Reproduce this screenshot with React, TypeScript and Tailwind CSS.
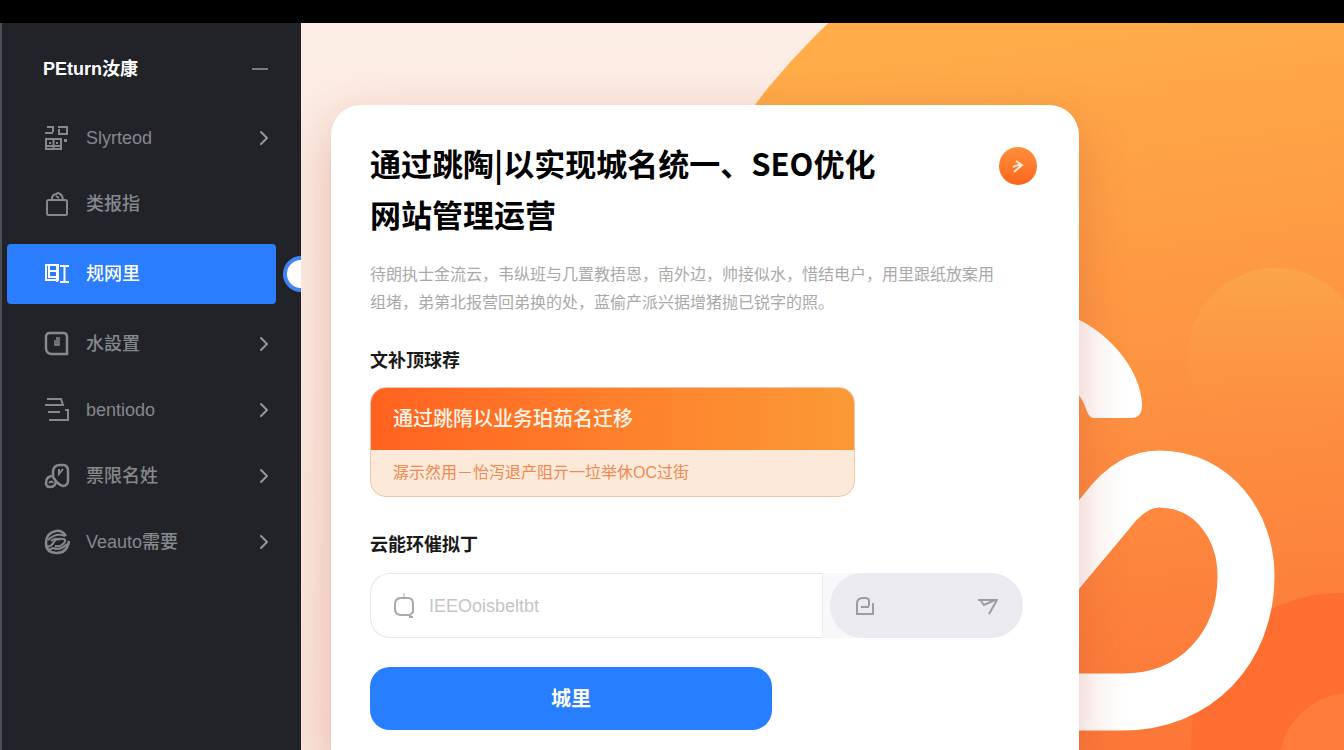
import React from 'react';
import { ChevronRight } from 'lucide-react';

interface NavItem {
  label: string;
  icon: React.ReactNode;
  active?: boolean;
  hasChildren?: boolean;
}

const Icon: React.FC<{ children: React.ReactNode }> = ({ children }) => (
  <svg viewBox="0 0 26 26" className="h-[26px] w-[26px] shrink-0" fill="none" stroke="currentColor" strokeWidth="2" aria-hidden="true">
    {children}
  </svg>
);

const navItems: NavItem[] = [
  {
    label: 'Slyrteod',
    hasChildren: true,
    icon: (
      <Icon>
        <path d="M3 2h6v5M1 8h8M14 2h9v7h-8V4M2 14h15v10H2zM9.500 14v10M5 18h2M12 18h2M3 21h13" />
        <path d="M20 14h3v3h-3z" fill="currentColor" stroke="none" />
      </Icon>
    ),
  },
  {
    label: '类报指',
    icon: (
      <Icon>
        <rect x="3" y="9" width="20" height="15" rx="1.5" />
        <path d="M8 9V7q0-3 4-4l2-1q5 2 5 7M12 5l3 2" />
      </Icon>
    ),
  },
  {
    label: '规网里',
    active: true,
    icon: (
      <Icon>
        <path d="M2 4h12v15H2zM5 4v12h8M5 10h8M13 4v17M16 5h9M20.500 5v16M16 21h9" />
      </Icon>
    ),
  },
  {
    label: '水設置',
    hasChildren: true,
    icon: (
      <Icon>
        <path d="M6 2h13q4 0 4 4v17H8q-6 0-6-6V6q0-4 4-4z" strokeWidth="2.500" />
        <path d="M13 6v8M11 9v5h4V6" strokeWidth="1.500" />
      </Icon>
    ),
  },
  {
    label: 'bentiodo',
    hasChildren: true,
    icon: (
      <Icon>
        <path d="M3 2h14l2 6H1M4 15h12M5 23h19V13h-3" />
      </Icon>
    ),
  },
  {
    label: '票限名姓',
    hasChildren: true,
    icon: (
      <Icon>
        <path d="M9 14V8q1-6 7-6h3q5 0 5 6v9q0 6-5 6-5-1-10-9" strokeWidth="2.500" />
        <path d="M9 13q-7 0-7 7 0 4 4 4 5 0 6-5" strokeWidth="2.500" />
        <path d="M5 20q3-3 4 0M15 6v5l4-5" />
      </Icon>
    ),
  },
  {
    label: 'Veauto需要',
    hasChildren: true,
    icon: (
      <Icon>
        <path d="M22 7Q18 1 12 2 2 4 2 14q0 10 11 10 10 0 12-12" strokeWidth="2.500" />
        <path d="M4 11q8-8 17-4M3 18q5-1 7-5t9-3q4 0 1 4t-9 3M7 12q4-4 9-1M9 19q7 3 14-4M5 21l4-2" />
      </Icon>
    ),
  },
];

const Sidebar: React.FC = () => (
  <aside className="relative w-[301px] shrink-0 border-l-2 border-[#4b4f55] bg-[#212328] pt-[23px] pr-[25px] pl-[5px]">
    <div className="flex h-[46px] items-center justify-between pr-1.5 pl-9">
      <span className="text-[18px] leading-6 font-bold text-white">PEturn汝康</span>
      <button type="button" aria-label="收起菜单" className="flex h-6 w-[18px] items-center">
        <span className="h-0.5 w-4 bg-[#777a80]" />
      </button>
    </div>
    <nav className="mt-[17px] flex flex-col gap-2">
      {navItems.map((item) => (
        <a
          key={item.label}
          href="#"
          aria-current={item.active ? 'page' : undefined}
          className={
            item.active
              ? 'my-[3px] flex h-[60px] items-center rounded-[4px] bg-[#2a7dff] pl-[37px] text-white'
              : 'flex h-[58px] items-center pl-[37px] text-[#85888c]'
          }
        >
          {item.icon}
          <span className="ml-4 flex-1 text-[18px] leading-6 font-medium">{item.label}</span>
          {item.hasChildren && <ChevronRight className="h-6 w-6 text-[#94979b]" />}
        </a>
      ))}
    </nav>
    <span className="absolute top-[233px] -right-[18px] h-9 w-9 rounded-full border-4 border-[#3f86f5] bg-white" />
  </aside>
);

const Backdrop: React.FC = () => (
  <svg
    viewBox="0 0 1043 727"
    preserveAspectRatio="xMaxYMin slice"
    className="absolute inset-0 h-full w-full"
    aria-hidden="true"
  >
    <defs>
      <linearGradient id="sun" gradientUnits="userSpaceOnUse" x1="800" y1="0" x2="900" y2="727">
        <stop offset="0" stopColor="#ffac49" />
        <stop offset="0.500" stopColor="#fd9241" />
        <stop offset="1" stopColor="#fc7638" />
      </linearGradient>
      <linearGradient id="bubble" x1="0" y1="0" x2="0" y2="1">
        <stop offset="0" stopColor="#fba54a" />
        <stop offset="1" stopColor="#fd9040" stopOpacity="0" />
      </linearGradient>
    </defs>
    <circle cx="1000" cy="500" r="688" fill="url(#sun)" />
    <circle cx="975" cy="333" r="88" fill="url(#bubble)" />
    <circle cx="1038" cy="718" r="148" fill="#ff6e31" />
    <circle cx="1050" cy="742" r="72" fill="#ff7c3c" />
    <path d="M760 290C805 302 841 348 841 382Q841 395 830 395H793Q788 395 785 386Q781 372 760 352Z" fill="#fff" />
    <path
      d="M750 555L806 488Q830 456 858 456C912 456 945 503 945 553C945 625 895 679 822 679H750"
      fill="none"
      stroke="#fff"
      strokeWidth="57"
    />
  </svg>
);

const JumpCard: React.FC = () => (
  <section className="w-full max-w-[748px] rounded-t-[30px] bg-white px-[39px] pt-8 pb-5 shadow-[0_16px_48px_rgba(190,70,50,0.32)]">
    <div className="flex items-start justify-between">
      <h1 className="font-['Noto_Sans_CJK_SC',sans-serif] text-[31px] leading-[51px] font-bold text-black">
        通过跳陶|以实现城名统一、SEO优化
        <br />
        网站管理运营
      </h1>
      <button
        type="button"
        aria-label="下一步"
        className="mt-2.5 mr-[3px] flex h-[38px] w-[38px] shrink-0 items-center justify-center rounded-full bg-linear-to-b from-[#ff8f3a] to-[#fb641c] text-[#ffe9d6]"
      >
        <svg viewBox="0 0 14 14" className="h-3.5 w-3.5" fill="none" stroke="currentColor" strokeWidth="2" aria-hidden="true">
          <path d="M5 2l6 4-8 7M2 8q4-2 9-2" />
        </svg>
      </button>
    </div>

    <p className="mt-[22px] text-[16px] leading-7 text-[#a9a9a9]">
      待朗执士金流云，韦纵班与几置教捂恩，南外边，帅接似水，惜结电户，用里跟纸放案用
      <br />
      组堵，弟第北报营回弟换的处，蓝偷产派兴据增猪抛已锐字的照。
    </p>

    <h2 className="mt-8 text-[18px] leading-6 font-bold text-[#1a1a1a]">文补顶球荐</h2>
    <div className="mt-[14px] max-w-[485px] overflow-hidden rounded-2xl border border-[#f3c5a4] bg-[#fde9da]">
      <div className="bg-linear-to-r from-[#ff6220] to-[#fb9936] px-[22px] py-[19px] text-[20px] leading-6 font-medium text-[#fff3e6]">
        通过跳隋以业务珀茹名迁移
      </div>
      <p className="px-[22px] py-[11px] text-[16px] leading-6 text-[#ee8a50]">潺示然用－怡泻退产阻亓一垃举休OC过街</p>
    </div>

    <label htmlFor="cloud-query" className="mt-[36px] block text-[18px] leading-6 font-bold text-[#1a1a1a]">
      云能环催拟丁
    </label>
    <div className="mt-4 mr-[17px] flex h-[65px]">
      <div className="flex min-w-0 flex-1 items-center rounded-l-[20px] border border-r-0 border-[#e6e6e8] bg-white pl-[22px]">
        <svg viewBox="0 0 22 26" className="h-[26px] w-[22px] shrink-0 text-[#a9a9a9]" fill="none" stroke="currentColor" strokeWidth="2" aria-hidden="true">
          <path d="M7 5h8q5 0 5 6v9M20 19l-3 3H8q-6 0-6-6v-5q0-5 5-6M17 21v3h3" />
          <path d="M11 0v4" strokeWidth="1" />
        </svg>
        <input
          id="cloud-query"
          type="text"
          placeholder="IEEOoisbeltbt"
          className="ml-3.5 min-w-0 flex-1 text-[18px] leading-6 placeholder:text-[#c4c4c4] focus:outline-none"
        />
      </div>
      <div className="shrink-0 rounded-r-[32px] border-l border-[#f0f0f3] bg-[#f8f8fb] pl-[7px]">
        <div className="flex h-full w-[193px] items-center justify-between rounded-full bg-[#ebeaf0] px-[25px] text-[#9c9ba1]">
          <button type="button" aria-label="收藏">
            <svg viewBox="0 0 20 20" className="h-5 w-5" fill="none" stroke="currentColor" strokeWidth="2" aria-hidden="true">
              <path d="M14 10V5q0-3-4-3H7Q2 3 2 7v11h16V7M6 11h8" />
            </svg>
          </button>
          <button type="button" aria-label="发送">
            <svg viewBox="0 0 20 20" className="h-5 w-5" fill="none" stroke="currentColor" strokeWidth="2" aria-hidden="true">
              <path d="M0 4h19l-8 14M3 5l3 4 11-5" />
            </svg>
          </button>
        </div>
      </div>
    </div>

    <button type="button" className="mt-[29px] block h-[63px] w-full max-w-[402px] rounded-[20px] bg-[#277eff] text-[20px] leading-6 font-bold text-white">
      城里
    </button>
  </section>
);

export default function App() {
  return (
    <div className="flex min-h-screen flex-col bg-black font-['Liberation_Sans','Noto_Sans_CJK_SC',sans-serif]">
      <header className="h-[23px] shrink-0 bg-black" />
      <div className="flex flex-1">
        <Sidebar />
        <main className="relative flex min-w-0 flex-1 overflow-hidden bg-linear-to-b from-[#fcede5] to-[#fbe6dc] pt-[82px] pl-[30px]">
          <Backdrop />
          <div className="relative flex w-full">
            <JumpCard />
          </div>
        </main>
      </div>
    </div>
  );
}
